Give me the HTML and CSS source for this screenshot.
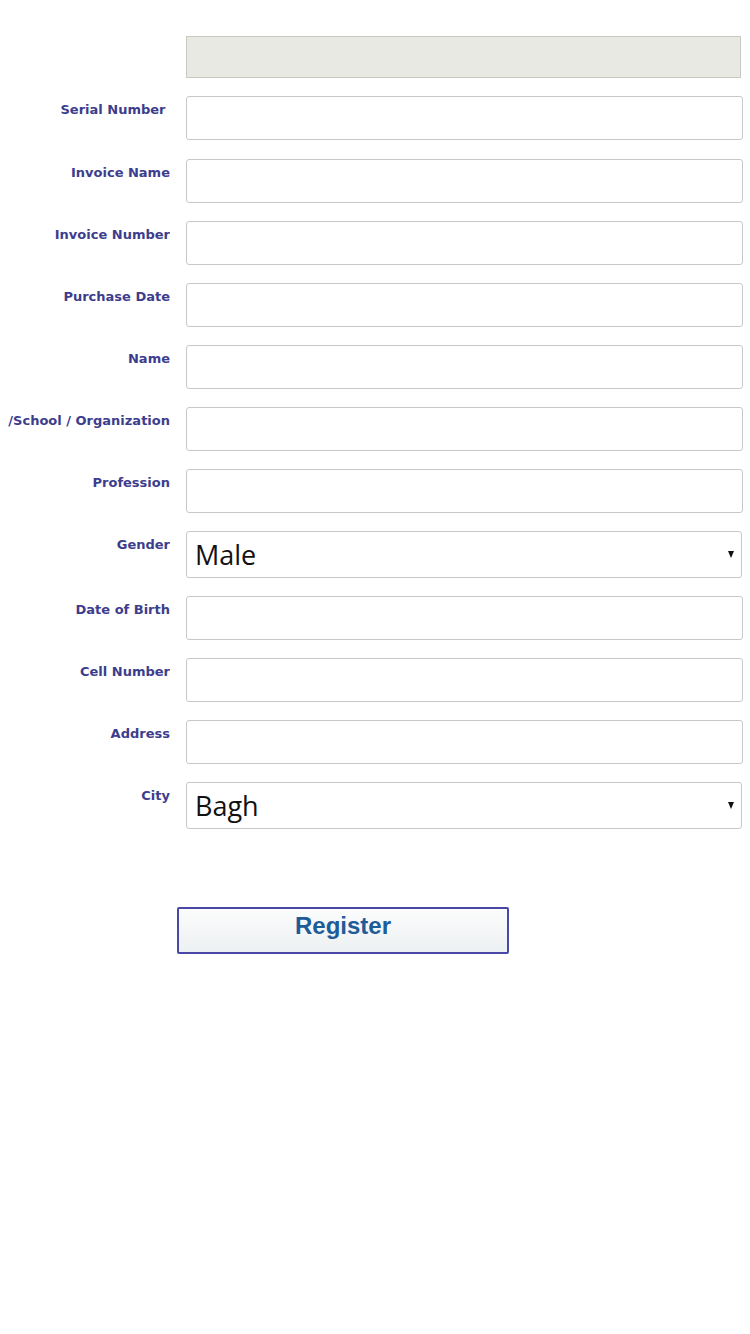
FILE: index.html
```html
<!DOCTYPE html>
<html>
<head>
<meta charset="utf-8">
<link rel="stylesheet" href="styles.css">
</head>
<body>
<form class="form">
  <div class="row row-top">
    <span class="label"></span>
    <div class="readonly"></div>
  </div>
  <div class="row row-first"><label class="label">Serial Number&nbsp;</label><input class="field" type="text"></div>
  <div class="row"><label class="label">Invoice Name</label><input class="field" type="text"></div>
  <div class="row"><label class="label">Invoice Number</label><input class="field" type="text"></div>
  <div class="row"><label class="label">Purchase Date</label><input class="field" type="text"></div>
  <div class="row"><label class="label">Name</label><input class="field" type="text"></div>
  <div class="row"><label class="label">/School / Organization</label><input class="field" type="text"></div>
  <div class="row"><label class="label">Profession</label><input class="field" type="text"></div>
  <div class="row"><label class="label">Gender</label><div class="select-wrap"><select class="select"><option>Male</option><option>Female</option></select></div></div>
  <div class="row"><label class="label">Date of Birth</label><input class="field" type="text"></div>
  <div class="row"><label class="label">Cell Number</label><input class="field" type="text"></div>
  <div class="row"><label class="label">Address</label><input class="field" type="text"></div>
  <div class="row"><label class="label">City</label><div class="select-wrap"><select class="select"><option>Bagh</option></select></div></div>
  <div class="actions"><button type="button" class="btn">Register</button></div>
</form>
</body>
</html>
```
FILE: styles.css
```css
html, body {
  margin: 0;
  padding: 0;
  background: #ffffff;
}
.form {
  padding-top: 36px;
  display: flex;
  flex-direction: column;
}
.row {
  display: grid;
  grid-template-columns: 170px 557px;
  column-gap: 16px;
  margin-bottom: 18px;
  align-items: start;
}
.row-top {
  margin-bottom: 18px;
}
.row-first {
  margin-bottom: 19px;
}
.label {
  font-family: "DejaVu Sans", Verdana, sans-serif;
  font-weight: bold;
  font-size: 13px;
  line-height: 17px;
  color: #3d3d8d;
  text-align: right;
  padding-top: 5px;
  white-space: nowrap;
  overflow: hidden;
}
.readonly {
  width: 553px;
  height: 40px;
  background: #e9e9e4;
  border: 1px solid #c9c9c4;
}
.field {
  box-sizing: border-box;
  width: 557px;
  height: 44px;
  margin: 0;
  border: 1px solid #c8c8c8;
  border-radius: 3px;
  background: #ffffff;
  font-size: 20px;
}
.select-wrap {
  position: relative;
  width: 557px;
}
.select-wrap::after {
  content: "";
  position: absolute;
  right: 9px;
  top: 20px;
  border-left: 3.5px solid transparent;
  border-right: 3.5px solid transparent;
  border-top: 7px solid #111111;
  pointer-events: none;
}
.select {
  box-sizing: border-box;
  width: 556px;
  height: 47px;
  margin: 0;
  padding: 0 0 0 8px;
  border: 1px solid #c8c8c8;
  border-radius: 3px;
  background: #ffffff;
  -webkit-appearance: none;
  appearance: none;
  font-family: "Open Sans", "Noto Sans", sans-serif;
  font-size: 27px;
  color: #111111;
}
.actions {
  padding-top: 60px;
  padding-left: 177px;
}
.btn {
  box-sizing: border-box;
  width: 332px;
  height: 47px;
  border: 2px solid #4a48a6;
  border-radius: 2px;
  background: linear-gradient(#fbfcfc, #edf0f2);
  font-family: "Liberation Sans", Arial, sans-serif;
  font-weight: bold;
  font-size: 24px;
  color: #1d5b99;
  padding: 0 0 9px 0;
}
```
